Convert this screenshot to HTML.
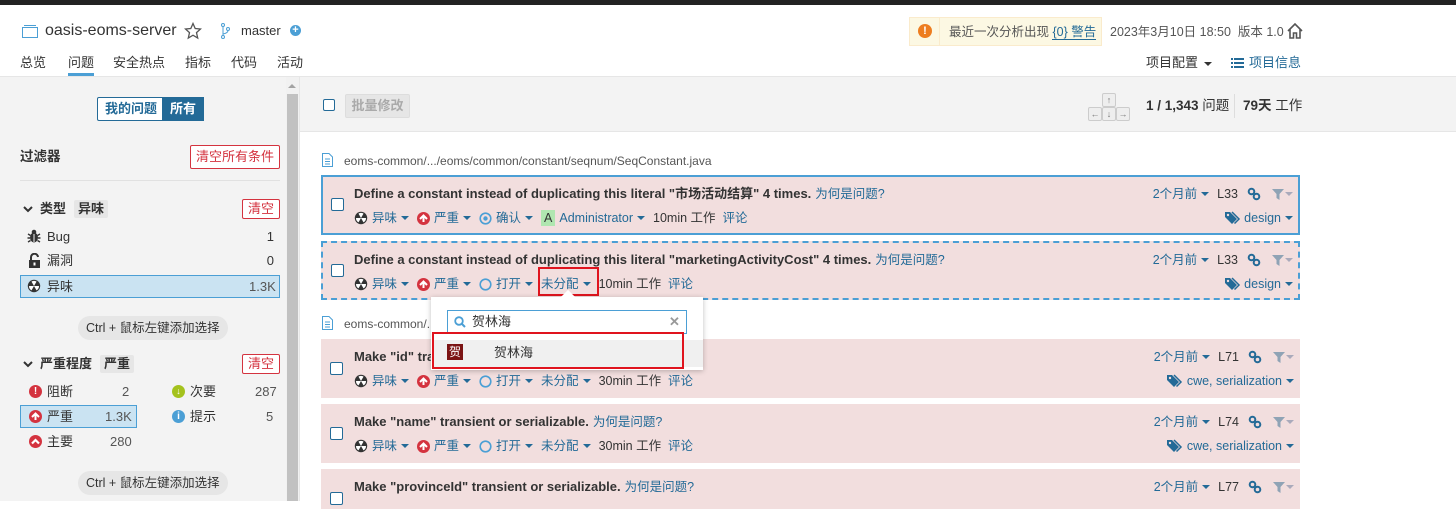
<!DOCTYPE html>
<html><head><meta charset="utf-8">
<style>
*{box-sizing:border-box;margin:0;padding:0}
body{width:1456px;height:501px;overflow:hidden;background:#fff;font-family:"Liberation Sans","Noto Sans CJK SC",sans-serif;font-size:13px;line-height:16px;color:#333;position:relative}
.a{position:absolute;white-space:nowrap}
.blue{color:#236a97}
.row{position:absolute;left:321px;width:979px;height:59px;background:#f2dede}
.row .cb{position:absolute;left:9px;top:23px;width:13px;height:13px;border:1px solid #236a97;border-radius:2px;background:#fff}
.row .t{position:absolute;left:33px;top:8px;font-size:13px;font-weight:bold;color:#333}
.row .t span{font-weight:normal;color:#236a97;font-size:12.5px;margin-left:4px}
.row .m{position:absolute;left:33px;top:33px;display:flex;align-items:center;color:#236a97;font-size:12.5px}
.m svg{margin-right:4px}
.car{display:inline-block;width:0;height:0;border-left:4px solid transparent;border-right:4px solid transparent;border-top:4px solid #236a97;margin:0 8px 0 4px;vertical-align:middle}
.r1{position:absolute;right:6px;top:8px;display:flex;align-items:center;color:#236a97;font-size:12.5px}
.r2{position:absolute;right:6px;top:32px;display:flex;align-items:center;color:#236a97;font-size:12.5px}
.dk{color:#333;margin-right:9px}
.lk{margin-right:11px}
.fac{position:absolute;left:20px;width:260px;height:22px;line-height:22px}
.pill{position:absolute;background:#e6e6e6;border-radius:12px;height:24px;line-height:24px;padding:0 8px;font-size:12.5px;color:#333}
.redb{position:absolute;border:1px solid #d4333f;color:#d4333f;background:#fff;text-align:center;border-radius:2px}
</style></head><body>
<svg width="0" height="0" style="position:absolute">
<defs>
<symbol id="smell" viewBox="0 0 14 14"><circle cx="7" cy="7" r="6.2" fill="#333"/><path d="M7 7L4.5 2.6A5 5 0 0 1 9.5 2.6Z M7 7L12 7A5 5 0 0 1 9.5 11.4Z M7 7L4.5 11.4A5 5 0 0 1 2 7Z" fill="#fff"/></symbol>
<symbol id="crit" viewBox="0 0 13 13"><circle cx="6.5" cy="6.5" r="6.5" fill="#d4333f"/><path d="M3 7L6.5 3.5L10 7M6.5 4V10" stroke="#fff" stroke-width="2" fill="none"/></symbol>
<symbol id="link" viewBox="0 0 14 14"><circle cx="4.5" cy="4.5" r="2.8" fill="none" stroke="#236a97" stroke-width="2"/><circle cx="9.5" cy="9.5" r="2.8" fill="none" stroke="#236a97" stroke-width="2"/></symbol>
<symbol id="filt" viewBox="0 0 12 12"><path d="M0 1H12L7.5 6V12L4.5 10V6Z" fill="#8fa3b5"/></symbol>
<symbol id="tag" viewBox="0 0 16 14"><path d="M0 1V6L7 13L12 8L5 1Z" fill="#236a97"/><path d="M7 1L14 8L9.5 12.5" fill="none" stroke="#236a97" stroke-width="1.5"/><circle cx="3" cy="4" r="1.2" fill="#f2dede"/></symbol>
</defs></svg>
<div class="a" style="left:0;top:0;width:1456px;height:5px;background:#222"></div>
<!-- header -->
<svg class="a" style="left:22px;top:24px" width="16" height="14" viewBox="0 0 16 14"><rect x="0.5" y="3.5" width="15" height="10" fill="none" stroke="#4b9fd5"/><line x1="2" y1="1.5" x2="14" y2="1.5" stroke="#4b9fd5"/></svg>
<div class="a" style="left:45px;top:21px;font-size:16px;line-height:20px;color:#333">oasis-eoms-server</div>
<svg class="a" style="left:184px;top:22px" width="18" height="18" viewBox="0 0 18 18"><path d="M9 1.5L11.2 6.5L16.5 7L12.5 10.6L13.7 16L9 13.2L4.3 16L5.5 10.6L1.5 7L6.8 6.5Z" fill="none" stroke="#555" stroke-width="1.3"/></svg>
<svg class="a" style="left:220px;top:23px" width="10" height="16" viewBox="0 0 10 16"><circle cx="3" cy="2" r="1.5" fill="none" stroke="#4b9fd5"/><circle cx="3" cy="14" r="1.5" fill="none" stroke="#4b9fd5"/><circle cx="8" cy="6" r="1.5" fill="none" stroke="#4b9fd5"/><path d="M3 3.5V12.5M8 7.5Q8 10 3 11" fill="none" stroke="#4b9fd5"/></svg>
<div class="a" style="left:241px;top:23px;font-size:13px">master</div>
<div class="a" style="left:290px;top:25px;width:11px;height:11px;border-radius:50%;background:#4b9fd5;color:#fff;font-size:11px;line-height:10px;text-align:center;font-weight:bold">+</div>
<div class="a" style="left:20px;top:55px;font-size:13px">总览</div>
<div class="a" style="left:68px;top:55px;font-size:13px">问题</div>
<div class="a" style="left:68px;top:73px;width:26px;height:3px;background:#4b9fd5"></div>
<div class="a" style="left:113px;top:55px;font-size:13px">安全热点</div>
<div class="a" style="left:185px;top:55px;font-size:13px">指标</div>
<div class="a" style="left:231px;top:55px;font-size:13px">代码</div>
<div class="a" style="left:277px;top:55px;font-size:13px">活动</div>
<div class="a" style="left:909px;top:17px;width:193px;height:29px;background:#fcf8e3;border:1px solid #faebcc"></div>
<div class="a" style="left:939px;top:18px;width:1px;height:27px;background:#faebcc"></div>
<div class="a" style="left:918px;top:24px;width:14px;height:14px;border-radius:50%;background:#ed7d20;color:#fff;font-size:11px;font-weight:bold;text-align:center;line-height:14px">!</div>
<div class="a" style="left:949px;top:24px;color:#555;font-size:12.5px">最近一次分析出现 <span class="blue" style="border-bottom:1px solid #236a97">{0} 警告</span></div>
<div class="a" style="left:1110px;top:24px;color:#555;font-size:12.5px">2023年3月10日 18:50 &nbsp;版本 1.0</div>
<svg class="a" style="left:1286px;top:22px" width="18" height="18" viewBox="0 0 18 18"><path d="M2 9L9 2L16 9M4 7.5V16H7.5V11H10.5V16H14V7.5" fill="none" stroke="#555" stroke-width="1.6"/></svg>
<div class="a" style="left:1146px;top:55px">项目配置 <span class="car" style="border-top-color:#333;margin:0 0 0 2px"></span></div>
<svg class="a" style="left:1231px;top:58px" width="13" height="10"><rect x="0" y="0" width="2" height="2" fill="#236a97"/><rect x="3" y="0" width="10" height="2" fill="#236a97"/><rect x="0" y="4" width="2" height="2" fill="#236a97"/><rect x="3" y="4" width="10" height="2" fill="#236a97"/><rect x="0" y="8" width="2" height="2" fill="#236a97"/><rect x="3" y="8" width="10" height="2" fill="#236a97"/></svg>
<div class="a blue" style="left:1249px;top:55px">项目信息</div>
<div class="a" style="left:0;top:76px;width:1456px;height:1px;background:#e6e6e6"></div>
<!-- sidebar -->
<div class="a" style="left:0;top:77px;width:286px;height:424px;background:#f3f3f3"></div>
<div class="a" style="left:286px;top:77px;width:13px;height:424px;background:#f1f1f1"></div>
<div class="a" style="left:287px;top:94px;width:11px;height:407px;background:#c1c1c1"></div>
<div class="a" style="left:288px;top:84px;width:0;height:0;border-left:4px solid transparent;border-right:4px solid transparent;border-bottom:4px solid #a3a3a3"></div>
<div class="a" style="left:299px;top:77px;width:1px;height:424px;background:#e6e6e6"></div>
<div class="a" style="left:97px;top:97px;width:107px;height:24px;border:1px solid #236a97;border-radius:2px;background:#fff"></div>
<div class="a" style="left:162px;top:97px;width:42px;height:24px;background:#236a97"></div>
<div class="a" style="left:105px;top:101px;font-weight:bold;color:#236a97">我的问题</div>
<div class="a" style="left:170px;top:101px;font-weight:bold;color:#fff">所有</div>
<div class="a" style="left:20px;top:149px;font-size:13.5px;font-weight:bold">过滤器</div>
<div class="redb" style="left:190px;top:145px;width:90px;height:24px;line-height:22px;font-size:13px">清空所有条件</div>
<div class="a" style="left:20px;top:180px;width:260px;height:1px;background:#e1e1e1"></div>
<svg class="a" style="left:23px;top:206px" width="10" height="7"><path d="M1 1L5 5L9 1" stroke="#333" stroke-width="2" fill="none"/></svg>
<div class="a" style="left:40px;top:201px;font-weight:bold">类型</div>
<div class="a" style="left:74px;top:200px;background:#e6e6e6;padding:1px 4px;font-weight:bold;border-radius:2px">异味</div>
<div class="redb" style="left:242px;top:199px;width:38px;height:20px;line-height:18px;font-size:13px">清空</div>
<svg class="a" style="left:27px;top:229px" width="14" height="14" viewBox="0 0 14 14"><ellipse cx="7" cy="8.5" rx="4" ry="5" fill="#333"/><circle cx="7" cy="3" r="2.3" fill="#333"/><path d="M1 5L3.5 6.5M13 5L10.5 6.5M0.5 9H3M13.5 9H11M1 13L3.5 11.5M13 13L10.5 11.5" stroke="#333" stroke-width="1.4"/><line x1="7" y1="5" x2="7" y2="13" stroke="#f3f3f3"/></svg>
<div class="fac" style="top:226px"><span style="position:absolute;left:27px">Bug</span><span style="position:absolute;right:6px">1</span></div>
<svg class="a" style="left:28px;top:253px" width="13" height="15"><path d="M3 7V4.5A3.5 3.5 0 0 1 10 4" stroke="#333" stroke-width="2" fill="none"/><rect x="1" y="7" width="11" height="8" fill="#333"/><rect x="5.5" y="9.5" width="2" height="3" fill="#fff"/></svg>
<div class="fac" style="top:250px"><span style="position:absolute;left:27px">漏洞</span><span style="position:absolute;right:6px">0</span></div>
<div class="fac" style="top:275px;height:23px;background:#cae3f2;border:1px solid #4b9fd5"></div>
<svg class="a" style="left:27px;top:279px" width="14" height="14"><use href="#smell"/></svg>
<div class="a" style="left:47px;top:279px">异味</div>
<div class="a" style="left:249px;top:279px;color:#555">1.3K</div>
<div class="pill" style="left:78px;top:316px">Ctrl + 鼠标左键添加选择</div>
<svg class="a" style="left:23px;top:361px" width="10" height="7"><path d="M1 1L5 5L9 1" stroke="#333" stroke-width="2" fill="none"/></svg>
<div class="a" style="left:40px;top:356px;font-weight:bold">严重程度</div>
<div class="a" style="left:100px;top:355px;background:#e6e6e6;padding:1px 4px;font-weight:bold;border-radius:2px">严重</div>
<div class="redb" style="left:242px;top:354px;width:38px;height:20px;line-height:18px;font-size:13px">清空</div>
<div class="a" style="left:29px;top:385px;width:13px;height:13px;border-radius:50%;background:#d4333f;color:#fff;font-size:10px;font-weight:bold;text-align:center;line-height:13px">!</div>
<div class="a" style="left:47px;top:384px">阻断</div><div class="a" style="left:122px;top:384px;color:#555">2</div>
<div class="a" style="left:172px;top:385px;width:13px;height:13px;border-radius:50%;background:#a4c21d;color:#fff;font-size:9px;font-weight:bold;text-align:center;line-height:13px">↓</div>
<div class="a" style="left:190px;top:384px">次要</div><div class="a" style="left:255px;top:384px;color:#555">287</div>
<div class="a" style="left:20px;top:405px;width:117px;height:23px;background:#cae3f2;border:1px solid #4b9fd5"></div>
<svg class="a" style="left:29px;top:410px" width="13" height="13"><use href="#crit"/></svg>
<div class="a" style="left:47px;top:409px">严重</div><div class="a" style="left:105px;top:409px;color:#555">1.3K</div>
<div class="a" style="left:172px;top:410px;width:13px;height:13px;border-radius:50%;background:#4b9fd5;color:#fff;font-size:10px;font-weight:bold;text-align:center;line-height:13px">i</div>
<div class="a" style="left:190px;top:409px">提示</div><div class="a" style="left:266px;top:409px;color:#555">5</div>
<svg class="a" style="left:29px;top:435px" width="13" height="13" viewBox="0 0 13 13"><circle cx="6.5" cy="6.5" r="6.5" fill="#d4333f"/><path d="M3 8.5L6.5 5L10 8.5" stroke="#fff" stroke-width="2.2" fill="none"/></svg>
<div class="a" style="left:47px;top:434px">主要</div><div class="a" style="left:110px;top:434px;color:#555">280</div>
<div class="pill" style="left:78px;top:471px">Ctrl + 鼠标左键添加选择</div>
<!-- main toolbar -->
<div class="a" style="left:300px;top:77px;width:1156px;height:54px;background:#f3f3f3"></div>
<div class="a" style="left:323px;top:99px;width:12px;height:12px;border:1px solid #236a97;border-radius:2px;background:#fff"></div>
<div class="a" style="left:345px;top:94px;width:65px;height:24px;background:#e6e6e6;border:1px solid #ddd;border-radius:2px;color:#aaa;font-weight:bold;text-align:center;line-height:22px">批量修改</div>
<div class="a" style="left:1102px;top:93px;width:14px;height:14px;border:1px solid #ccc;background:#eee;border-radius:2px;font-size:9px;text-align:center;line-height:12px;color:#777">↑</div>
<div class="a" style="left:1088px;top:107px;width:14px;height:14px;border:1px solid #ccc;background:#eee;border-radius:2px;font-size:9px;text-align:center;line-height:12px;color:#777">←</div>
<div class="a" style="left:1102px;top:107px;width:14px;height:14px;border:1px solid #ccc;background:#eee;border-radius:2px;font-size:9px;text-align:center;line-height:12px;color:#777">↓</div>
<div class="a" style="left:1116px;top:107px;width:14px;height:14px;border:1px solid #ccc;background:#eee;border-radius:2px;font-size:9px;text-align:center;line-height:12px;color:#777">→</div>
<div class="a" style="left:1146px;top:98px;font-size:13.5px"><b>1 / 1,343</b> 问题</div>
<div class="a" style="left:1234px;top:94px;width:1px;height:24px;background:#ddd"></div>
<div class="a" style="left:1243px;top:98px;font-size:13.5px"><b>79天</b> 工作</div>
<div class="a" style="left:300px;top:131px;width:1156px;height:1px;background:#e6e6e6"></div>
<!-- file headers -->
<svg class="a" style="left:322px;top:153px" width="11" height="14"><path d="M0.5 0.5H7L10.5 4V13.5H0.5Z" fill="#fff" stroke="#4b9fd5"/><path d="M3 6H8M3 8.5H8M3 11H8" stroke="#4b9fd5"/></svg>
<div class="a" style="left:344px;top:153px;font-size:12px;color:#555">eoms-common/.../eoms/common/constant/seqnum/SeqConstant.java</div>
<svg class="a" style="left:322px;top:316px" width="11" height="14"><path d="M0.5 0.5H7L10.5 4V13.5H0.5Z" fill="#fff" stroke="#4b9fd5"/><path d="M3 6H8M3 8.5H8M3 11H8" stroke="#4b9fd5"/></svg>
<div class="a" style="left:344px;top:316px;font-size:12px;color:#555">eoms-common/...</div>

<!-- rows -->
<div class="row" style="top:175px;height:60px;border:2px solid #4b9fd5">
 <div class="cb" style="left:8px;top:21px"></div>
 <div class="t" style="left:31px;top:9px">Define a constant instead of duplicating this literal "市场活动结算" 4 times.<span>为何是问题?</span></div>
 <div class="m" style="left:31px;top:33px">
  <svg width="14" height="14"><use href="#smell"/></svg>异味<i class="car"></i>
  <svg width="13" height="13"><use href="#crit"/></svg>严重<i class="car"></i>
  <svg width="13" height="13"><circle cx="6.5" cy="6.5" r="5.3" fill="none" stroke="#4b9fd5" stroke-width="1.6"/><circle cx="6.5" cy="6.5" r="2.2" fill="#4b9fd5"/></svg>确认<i class="car"></i>
  <span style="background:#b0e6b0;color:#333;padding:0 3px;margin-right:4px">A</span>Administrator<i class="car"></i><span style="color:#333">10min 工作</span>&nbsp;&nbsp;评论
 </div>
 <div class="r1" style="right:5px;top:9px">2个月前<i class="car"></i><span class="dk">L33</span><svg class="lk" width="14" height="14"><use href="#link"/></svg><svg width="12" height="12"><use href="#filt"/></svg><i class="car" style="border-top-color:#aab;margin:0 0 0 1px"></i></div>
 <div class="r2" style="right:5px;top:33px"><svg width="16" height="14"><use href="#tag"/></svg>&nbsp;design<i class="car" style="margin-right:0"></i></div>
</div>
<div class="row" style="top:241px;height:59px;border:2px dashed #4b9fd5">
 <div class="cb" style="left:8px;top:21px"></div>
 <div class="t" style="left:31px;top:9px">Define a constant instead of duplicating this literal "marketingActivityCost" 4 times.<span>为何是问题?</span></div>
 <div class="m" style="left:31px;top:33px">
  <svg width="14" height="14"><use href="#smell"/></svg>异味<i class="car"></i>
  <svg width="13" height="13"><use href="#crit"/></svg>严重<i class="car"></i>
  <svg width="13" height="13"><circle cx="6.5" cy="6.5" r="5.3" fill="none" stroke="#4b9fd5" stroke-width="1.6"/></svg>打开<i class="car"></i>未分配<i class="car"></i><span style="color:#333">10min 工作</span>&nbsp;&nbsp;评论
 </div>
 <div class="r1" style="right:5px;top:9px">2个月前<i class="car"></i><span class="dk">L33</span><svg class="lk" width="14" height="14"><use href="#link"/></svg><svg width="12" height="12"><use href="#filt"/></svg><i class="car" style="border-top-color:#aab;margin:0 0 0 1px"></i></div>
 <div class="r2" style="right:5px;top:33px"><svg width="16" height="14"><use href="#tag"/></svg>&nbsp;design<i class="car" style="margin-right:0"></i></div>
</div>

<div class="row" style="top:339px">
 <div class="cb"></div>
 <div class="t" style="top:10px">Make "id" transient or serializable.<span>为何是问题?</span></div>
 <div class="m" style="top:34px">
  <svg width="14" height="14"><use href="#smell"/></svg>异味<i class="car"></i>
  <svg width="13" height="13"><use href="#crit"/></svg>严重<i class="car"></i>
  <svg width="13" height="13"><circle cx="6.5" cy="6.5" r="5.3" fill="none" stroke="#4b9fd5" stroke-width="1.6"/></svg>打开<i class="car"></i>未分配<i class="car"></i><span style="color:#333">30min 工作</span>&nbsp;&nbsp;评论
 </div>
 <div class="r1" style="top:10px">2个月前<i class="car"></i><span class="dk">L71</span><svg class="lk" width="14" height="14"><use href="#link"/></svg><svg width="12" height="12"><use href="#filt"/></svg><i class="car" style="border-top-color:#aab;margin:0 0 0 1px"></i></div>
 <div class="r2" style="top:34px"><svg width="16" height="14"><use href="#tag"/></svg>&nbsp;cwe, serialization<i class="car" style="margin-right:0"></i></div>
</div>
<div class="row" style="top:404px">
 <div class="cb"></div>
 <div class="t" style="top:10px">Make "name" transient or serializable.<span>为何是问题?</span></div>
 <div class="m" style="top:34px">
  <svg width="14" height="14"><use href="#smell"/></svg>异味<i class="car"></i>
  <svg width="13" height="13"><use href="#crit"/></svg>严重<i class="car"></i>
  <svg width="13" height="13"><circle cx="6.5" cy="6.5" r="5.3" fill="none" stroke="#4b9fd5" stroke-width="1.6"/></svg>打开<i class="car"></i>未分配<i class="car"></i><span style="color:#333">30min 工作</span>&nbsp;&nbsp;评论
 </div>
 <div class="r1" style="top:10px">2个月前<i class="car"></i><span class="dk">L74</span><svg class="lk" width="14" height="14"><use href="#link"/></svg><svg width="12" height="12"><use href="#filt"/></svg><i class="car" style="border-top-color:#aab;margin:0 0 0 1px"></i></div>
 <div class="r2" style="top:34px"><svg width="16" height="14"><use href="#tag"/></svg>&nbsp;cwe, serialization<i class="car" style="margin-right:0"></i></div>
</div>
<div class="row" style="top:469px;height:40px">
 <div class="cb" style="top:23px"></div>
 <div class="t" style="top:10px">Make "provinceId" transient or serializable.<span>为何是问题?</span></div>
 <div class="r1" style="top:10px">2个月前<i class="car"></i><span class="dk">L77</span><svg class="lk" width="14" height="14"><use href="#link"/></svg><svg width="12" height="12"><use href="#filt"/></svg><i class="car" style="border-top-color:#aab;margin:0 0 0 1px"></i></div>
</div>

<!-- red highlight on 未分配 -->
<div class="a" style="left:538px;top:267px;width:61px;height:29px;border:2px solid #e0141e"></div>
<!-- popup -->
<div class="a" style="left:431px;top:297px;width:272px;height:73px;background:#fff;box-shadow:0 1px 5px rgba(0,0,0,.25)"></div>
<div class="a" style="left:563px;top:292px;width:10px;height:10px;background:#fff;transform:rotate(45deg)"></div>
<div class="a" style="left:447px;top:310px;width:240px;height:24px;border:1px solid #4b9fd5;background:#fff"></div>
<svg class="a" style="left:454px;top:316px" width="12" height="12"><circle cx="5" cy="5" r="3.8" fill="none" stroke="#4b9fd5" stroke-width="1.8"/><path d="M8 8L11 11" stroke="#4b9fd5" stroke-width="2"/></svg>
<div class="a" style="left:472px;top:314px">贺林海</div>
<div class="a" style="left:669px;top:314px;color:#999;font-weight:bold;font-size:13px">✕</div>
<div class="a" style="left:432px;top:340px;width:271px;height:27px;background:#f0f0f0"></div>
<div class="a" style="left:447px;top:344px;width:16px;height:16px;background:#7b1414;color:#fff;font-size:12px;text-align:center;line-height:16px">贺</div>
<div class="a" style="left:494px;top:345px">贺林海</div>
<div class="a" style="left:432px;top:332px;width:252px;height:37px;border:2px solid #e0141e"></div>
</body></html>
